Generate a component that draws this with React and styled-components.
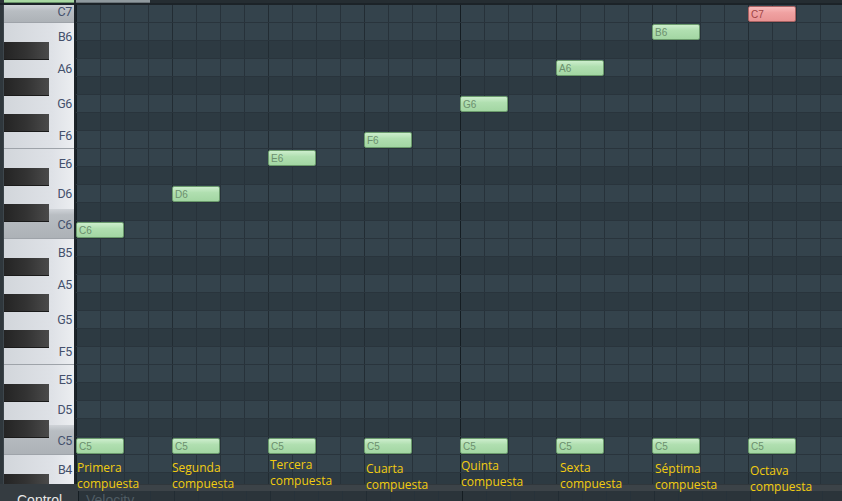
import React from "react";
import styled, { createGlobalStyle } from "styled-components";

const GlobalStyle = createGlobalStyle`
  html, body {
    margin: 0;
    padding: 0;
    background: #2b3338;
  }
  * {
    box-sizing: border-box;
  }
`;

const ROW = 18;
const BLACK = [1, 3, 6, 8, 10];

const Page = styled.div`
  width: 842px;
  height: 501px;
  overflow: hidden;
  display: flex;
  flex-direction: column;
  background: #2b3338;
  font-family: "Liberation Sans", Arial, sans-serif;
`;

const TopBar = styled.div`
  height: 5px;
  display: flex;
  align-items: flex-start;
  background: #252d32;
  border-bottom: 2px solid #1c2328;
`;
const EdgeTab = styled.div`
  width: 4px;
  height: 3px;
  background: #2b3237;
`;
const Tab = styled.div`
  width: ${(p) => p.$w}px;
  height: 3px;
  margin-right: 2px;
  background: ${(p) => p.$bg};
  border-bottom: 1px solid ${(p) => p.$edge};
`;

const Body = styled.div`
  height: 479px;
  display: flex;
  position: relative;
  z-index: 1;
`;
const LeftEdge = styled.div`
  width: 4px;
  background: #2f373c;
  border-right: 1px solid #3d464c;
`;

const Keyboard = styled.div`
  width: 72px;
  position: relative;
  overflow: hidden;
  display: flex;
  flex-direction: column;
  border-right: 2px solid #1d2429;
`;
const WhiteKey = styled.div`
  flex: 0 0 ${(p) => p.$h}px;
  display: flex;
  align-items: center;
  justify-content: flex-end;
  padding-right: 2px;
  padding-top: ${(p) => Math.max(0, p.$nudge * 2)}px;
  padding-bottom: ${(p) => Math.max(0, -p.$nudge * 2)}px;
  background: ${(p) =>
    p.$c
      ? "linear-gradient(to bottom, #cfd3d8 0, #b8bdc2 6px, #adb2b7 100%)"
      : "linear-gradient(to right, #d2d6db 0, #dfe2e7 70%, #eceef1 100%)"};
  border-bottom: ${(p) => (p.$edge ? "1px solid #9ea3a9" : "none")};
`;
const KeyLabel = styled.span`
  font-family: Roboto, "Liberation Sans", sans-serif;
  font-size: 12.5px;
  letter-spacing: -0.4px;
  color: #44506c;
  line-height: 1;
`;
const BlackKey = styled.div`
  position: absolute;
  left: 0;
  width: 45px;
  height: 18px;
  background: linear-gradient(to right, #242424 0, #333 50%, #4a4a4a 100%);
  border-bottom: 1px solid #1a1a1a;
`;

const Roll = styled.div`
  flex: 1;
  position: relative;
`;
const Rows = styled.div`
  height: 100%;
  overflow: hidden;
`;
const gridLines = `
  repeating-linear-gradient(to right, #151d22 0 1px, transparent 1px 384px),
  repeating-linear-gradient(to right, #222c33 0 1px, transparent 1px 96px),
  repeating-linear-gradient(to right, #27323a 0 1px, transparent 1px 24px)
`;
const GridRow = styled.div`
  height: ${ROW}px;
  background-image: ${gridLines};
  background-color: ${(p) => (p.$black ? "#2d3a42" : "#34434c")};
  border-bottom: 1px solid #29343c;
`;

const Note = styled.div`
  position: absolute;
  width: 48px;
  height: 16px;
  border-radius: 2px;
  padding-left: 2px;
  display: flex;
  align-items: center;
  font-size: 10px;
  color: ${(p) => (p.$red ? "#a04444" : "#6b8f6d")};
  background: ${(p) =>
    p.$red
      ? "linear-gradient(to bottom, #f8bcbc 0, #f0a2a2 40%, #e99494 100%)"
      : "linear-gradient(to bottom, #cdeecd 0, #b0dfb0 40%, #a3d6a3 100%)"};
  border: 1px solid ${(p) => (p.$red ? "#a86262" : "#6a9a6c")};
`;

const Caption = styled.div`
  position: absolute;
  font-family: "Open Sans", "Noto Sans", sans-serif;
  font-size: 12px;
  line-height: 16px;
  color: #f2cc10;
  white-space: nowrap;
`;

const Bottom = styled.div`
  flex: 1;
  display: flex;
`;
const ControlPanel = styled.div`
  width: 78px;
  background: #353c41;
  padding: 8px 0 0 17px;
  font-size: 14px;
  line-height: 16px;
  color: #e8e8e8;
`;
const EventArea = styled.div`
  flex: 1;
  display: flex;
  flex-direction: column;
`;
const Band = styled.div`
  height: 7px;
  background: #3c4348;
  border-top: 1px solid #30373c;
`;
const EventGrid = styled.div`
  flex: 1;
  padding: 1px 0 0 8px;
  background-image: ${gridLines};
  background-color: #2b343a;
  font-size: 14px;
  line-height: 16px;
  color: #4f5c64;
`;

const octave = (n) => [
  { name: "B", n, h: 31.5, nudge: -2 },
  { name: "A", n, h: 31.5, nudge: -1 },
  { name: "G", n, h: 31.5, nudge: 2.5 },
  { name: "F", n, h: 31.5, nudge: 3.5, edge: true },
  { name: "E", n, h: 30, nudge: 0 },
  { name: "D", n, h: 30, nudge: 0 },
  { name: "C", n, h: 30, nudge: 2, c: true, edge: true },
];
const whiteKeys = [
  { name: "C", n: 7, h: 18, nudge: -1.5, c: true, edge: true },
  ...octave(6),
  ...octave(5),
  { name: "B", n: 4, h: 31.5, nudge: -1 },
];

const rows = Array.from({ length: 27 }, (_, r) => BLACK.includes((96 - r) % 12));

const melody = [
  { row: 12, label: "C6" },
  { row: 10, label: "D6" },
  { row: 8, label: "E6" },
  { row: 7, label: "F6" },
  { row: 5, label: "G6" },
  { row: 3, label: "A6" },
  { row: 1, label: "B6" },
  { row: 0, label: "C7", red: true },
];

const captions = [
  { a: "Primera", dx: 1, top: 455 },
  { a: "Segunda", dx: 0, top: 455 },
  { a: "Tercera", dx: 2, top: 452 },
  { a: "Cuarta", dx: 2, top: 456 },
  { a: "Quinta", dx: 1, top: 453 },
  { a: "Sexta", dx: 4, top: 455 },
  { a: "Séptima", dx: 3, top: 456 },
  { a: "Octava", dx: 2, top: 458 },
];

export default function App() {
  return (
    <Page>
      <GlobalStyle />
      <TopBar>
        <EdgeTab />
        <Tab $w={70} $bg="#a8d8a2" $edge="#6a946a" />
        <Tab $w={74} $bg="#8f999e" $edge="#6c757a" />
      </TopBar>
      <Body>
        <LeftEdge />
        <Keyboard>
          {whiteKeys.map((k, i) => (
            <WhiteKey key={i} $h={k.h} $nudge={k.nudge} $c={k.c} $edge={k.edge}>
              <KeyLabel>
                {k.name}
                {k.n}
              </KeyLabel>
            </WhiteKey>
          ))}
          {rows.map((black, r) =>
            black ? <BlackKey key={r} style={{ top: r * ROW + 1 }} /> : null
          )}
        </Keyboard>
        <Roll>
          <Rows>
            {rows.map((black, r) => (
              <GridRow key={r} $black={black} />
            ))}
          </Rows>
          {melody.map((m, i) => (
            <React.Fragment key={i}>
              <Note $red={m.red} style={{ left: i * 96, top: m.row * ROW + 1 }}>
                {m.label}
              </Note>
              <Note style={{ left: i * 96, top: 24 * ROW + 1 }}>C5</Note>
            </React.Fragment>
          ))}
          {captions.map((c, i) => (
            <Caption key={c.a} style={{ left: i * 96 + c.dx, top: c.top }}>
              {c.a}
              <br />
              compuesta
            </Caption>
          ))}
        </Roll>
      </Body>
      <Bottom>
        <ControlPanel>Control</ControlPanel>
        <EventArea>
          <Band />
          <EventGrid>Velocity</EventGrid>
        </EventArea>
      </Bottom>
    </Page>
  );
}
